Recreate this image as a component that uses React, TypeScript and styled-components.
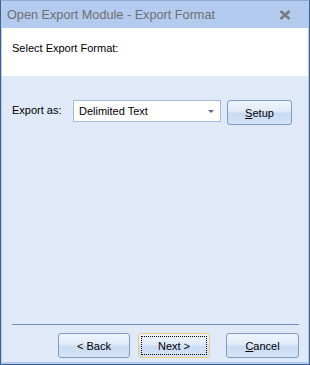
import styled, { createGlobalStyle } from 'styled-components';

const Global = createGlobalStyle`
    html, body {
        margin: 0;
        padding: 0;
        background: #ffffff;
    }
    * {
        box-sizing: border-box;
    }
`;

const Frame = styled.div`
    width: 310px;
    height: 365px;
    display: flex;
    flex-direction: column;
    border: 1px solid #3f5f8c;
    border-top-color: #8fa9d3;
    background: #b3cbef;
    padding: 0 1px 2px 1px;
    font-family: "Liberation Sans", Arial, sans-serif;
`;

const TitleBar = styled.div`
    height: 27px;
    display: flex;
    align-items: center;
    justify-content: space-between;
    padding: 0 17px 0 5px;
    color: #6f6f6f;
    font-size: 12.7px;
`;

const Header = styled.div`
    height: 48px;
    background: #ffffff;
    padding: 14px 0 0 10px;
    font-size: 11px;
    color: #000;
`;

const Body = styled.div`
    flex: 1;
    display: flex;
    flex-direction: column;
    background: #dfe9f8;
    padding: 24px 9px 4px 10px;
`;

const FormRow = styled.div`
    display: flex;
    align-items: flex-start;
`;

const Label = styled.span`
    width: 61px;
    padding-top: 4px;
    font-size: 11px;
    color: #000;
`;

const Combo = styled.div`
    width: 148px;
    height: 22px;
    background: #ffffff;
    border: 1px solid #a7bcd9;
    display: flex;
    align-items: center;
    justify-content: space-between;
    padding: 0 6px 0 5px;
    font-size: 11px;
    color: #000;
`;

const Arrow = styled.span`
    width: 0;
    height: 0;
    border-left: 3px solid transparent;
    border-right: 3px solid transparent;
    border-top: 3px solid #56688e;
    margin-top: 1px;
`;

const Spacer = styled.div`
    flex: 1;
`;

const Separator = styled.div`
    height: 1px;
    background: #6b8dc4;
    margin: 0 0 8px 0;
`;

const ButtonRow = styled.div`
    display: flex;
    justify-content: flex-end;
    gap: 8px;
`;

const Button = styled.button<{ $w: number; $h?: number; $focus?: boolean; $gapLeft?: number }>`
    width: ${p => p.$w}px;
    height: ${p => p.$h ?? 25}px;
    margin-left: ${p => p.$gapLeft ?? 0}px;
    border: 1px solid ${p => (p.$focus ? '#e8cf80' : '#7f9cc6')};
    border-radius: 3px;
    background: linear-gradient(to bottom, #eef4fc 0%, #e1ebf9 45%, #c9dbf3 55%, #d4e3f7 100%);
    font-family: "Liberation Sans", Arial, sans-serif;
    font-size: 11px;
    color: #000;
    padding: 2px;
    display: flex;
    cursor: default;
`;

const ButtonFace = styled.span<{ $focus?: boolean }>`
    flex: 1;
    display: flex;
    align-items: center;
    justify-content: center;
    border: 1px dotted ${p => (p.$focus ? '#000' : 'transparent')};
`;

const Key = styled.span`
    text-decoration: underline;
`;

function CloseIcon() {
    return (
        <svg width="12" height="10" viewBox="0 0 12 10">
            <path d="M1.5 1 L10.5 9 M10.5 1 L1.5 9" stroke="#7b7b7b" strokeWidth="2.6" />
        </svg>
    );
}

export default function App() {
    return (
        <>
            <Global />
            <Frame>
                <TitleBar>
                    <span>Open Export Module - Export Format</span>
                    <CloseIcon />
                </TitleBar>
                <Header>Select Export Format:</Header>
                <Body>
                    <FormRow>
                        <Label>Export as:</Label>
                        <Combo>
                            <span>Delimited Text</span>
                            <Arrow />
                        </Combo>
                        <Button $w={65} $gapLeft={6}>
                            <ButtonFace><Key>S</Key>etup</ButtonFace>
                        </Button>
                    </FormRow>
                    <Spacer />
                    <Separator />
                    <ButtonRow>
                        <Button $w={72}>
                            <ButtonFace>&lt; Back</ButtonFace>
                        </Button>
                        <Button $w={72} $focus>
                            <ButtonFace $focus>Next &gt;</ButtonFace>
                        </Button>
                        <Button $w={73} $gapLeft={8}>
                            <ButtonFace><Key>C</Key>ancel</ButtonFace>
                        </Button>
                    </ButtonRow>
                </Body>
            </Frame>
        </>
    );
}
